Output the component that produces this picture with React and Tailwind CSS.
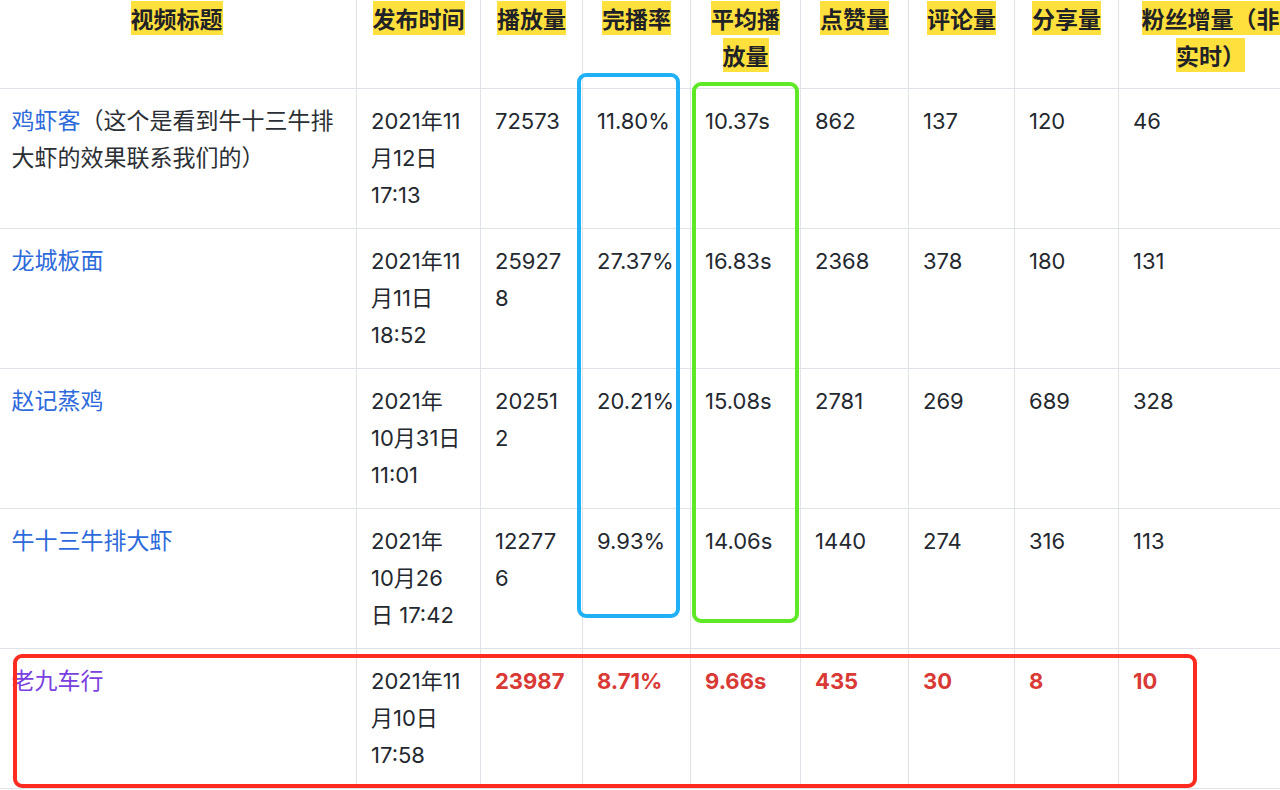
import React from "react";

const cols = [360, 124, 102, 108, 110, 108, 106, 104, 184];

const headers = [
  ["视频标题"],
  ["发布时间"],
  ["播放量"],
  ["完播率"],
  ["平均播", "放量"],
  ["点赞量"],
  ["评论量"],
  ["分享量"],
  ["粉丝增量（非", "实时）"],
];

const rows = [
  {
    title: "鸡虾客",
    extra: ["（这个是看到牛十三牛排", "大虾的效果联系我们的）"],
    date: ["2021年11", "月12日", "17:13"],
    vals: [["72573"], ["11.80%"], ["10.37s"], ["862"], ["137"], ["120"], ["46"]],
  },
  {
    title: "龙城板面",
    date: ["2021年11", "月11日", "18:52"],
    vals: [["25927", "8"], ["27.37%"], ["16.83s"], ["2368"], ["378"], ["180"], ["131"]],
  },
  {
    title: "赵记蒸鸡",
    date: ["2021年", "10月31日", "11:01"],
    vals: [["20251", "2"], ["20.21%"], ["15.08s"], ["2781"], ["269"], ["689"], ["328"]],
  },
  {
    title: "牛十三牛排大虾",
    date: ["2021年", "10月26", "日 17:42"],
    vals: [["12277", "6"], ["9.93%"], ["14.06s"], ["1440"], ["274"], ["316"], ["113"]],
  },
  {
    title: "老九车行",
    visited: true,
    date: ["2021年11", "月10日", "17:58"],
    vals: [["23987"], ["8.71%"], ["9.66s"], ["435"], ["30"], ["8"], ["10"]],
    red: true,
  },
];

function Lines({ lines }) {
  return lines.map((l, i) => (
    <React.Fragment key={i}>
      {i > 0 && <br />}
      {l}
    </React.Fragment>
  ));
}

export default function App() {
  return (
    <div className="relative w-[1280px] h-[790px] overflow-hidden bg-white">
      <table
        className="table-fixed border-collapse w-[1306px] -mt-[14px] -ml-[4px] text-[#24292f] text-[22px] leading-[37px] font-['Inter','Noto_Sans_CJK_SC',sans-serif]"
      >
        <colgroup>
          {cols.map((w, i) => (
            <col key={i} style={{ width: w }} />
          ))}
        </colgroup>
        <thead>
          <tr>
            {headers.map((h, i) => (
              <th
                key={i}
                className="border border-[#dfe2e7] border-t-0 px-[14px] py-[14px] align-top text-center font-bold whitespace-nowrap font-['Noto_Sans_CJK_SC',sans-serif] text-[23px] leading-[37px] text-[#1f2328]"
              >
                <span className="bg-[#ffe03c]">
                  <Lines lines={h} />
                </span>
              </th>
            ))}
          </tr>
        </thead>
        <tbody>
          {rows.map((r, ri) => (
            <tr key={ri}>
              <td className="border border-[#dfe2e7] border-l-0 px-[15px] py-[14px] align-top whitespace-nowrap text-[23px]">
                <span className={r.visited ? "text-[#7a40e0]" : "text-[#2d6adb]"}>{r.title}</span>
                {r.extra && (
                  <span className="text-[#2b2f33]">
                    <Lines lines={r.extra} />
                  </span>
                )}
              </td>
              <td className="border border-[#dfe2e7] px-[14px] py-[14px] align-top whitespace-nowrap">
                <Lines lines={r.date} />
              </td>
              {r.vals.map((v, vi) => (
                <td
                  key={vi}
                  className={
                    "border border-[#dfe2e7] px-[14px] py-[14px] align-top whitespace-nowrap " +
                    (r.red ? "text-[#d93a35] font-bold" : "")
                  }
                >
                  <Lines lines={v} />
                </td>
              ))}
            </tr>
          ))}
        </tbody>
      </table>

      <div className="absolute left-[577px] top-[73px] w-[103px] h-[545px] border-[4px] border-[#1fb0f7] rounded-[9px]" />
      <div className="absolute left-[692px] top-[82px] w-[107px] h-[541px] border-[4px] border-[#5ee826] rounded-[9px]" />
      <div className="absolute left-[13px] top-[654px] w-[1184px] h-[134px] border-[4px] border-[#fe2b20] rounded-[9px]" />
    </div>
  );
}
